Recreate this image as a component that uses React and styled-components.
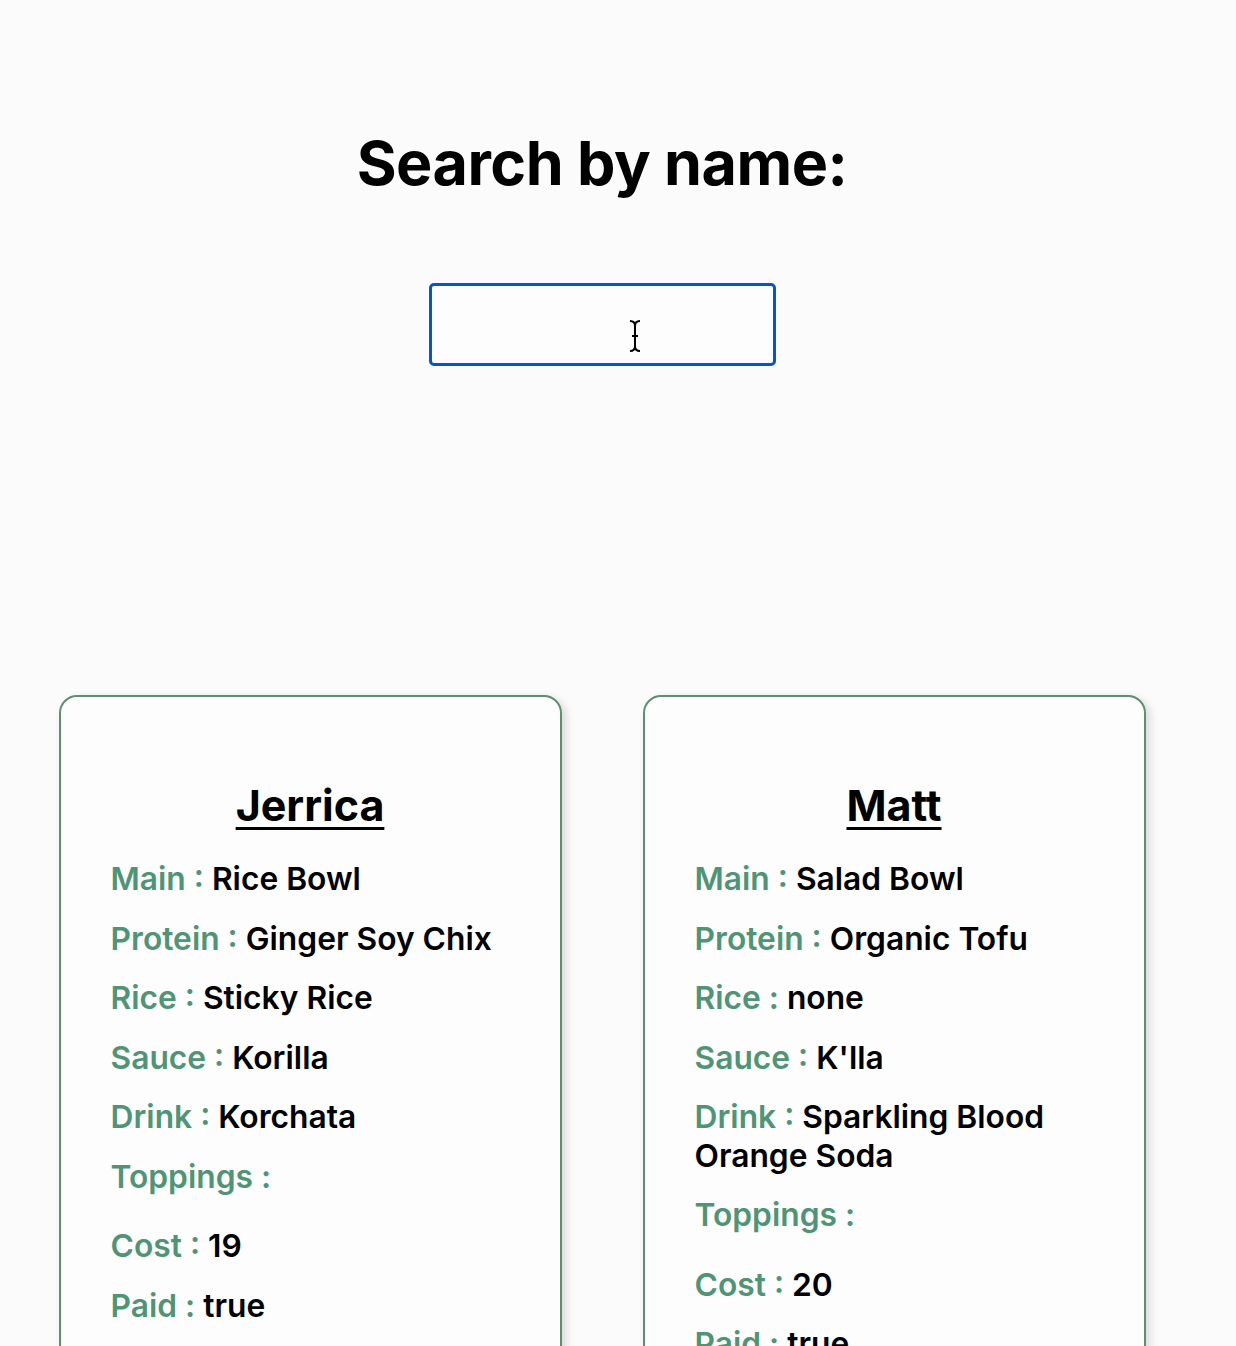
import React from 'react';
import styled, { createGlobalStyle } from 'styled-components';

const GlobalStyle = createGlobalStyle`
  html, body {
    margin: 0;
    background: #fbfbfb;
    font-family: Inter, "Noto Sans", "Liberation Sans", sans-serif;
    color: #000;
  }
`;

const Page = styled.div`
  width: 1204px;
  padding-top: 126px;
  display: flex;
  flex-direction: column;
  align-items: center;
`;

const Heading = styled.h1`
  margin: 0;
  font-size: 61px;
  font-weight: 700;
  letter-spacing: -0.5px;
  line-height: 75px;
`;

const SearchWrap = styled.div`
  position: relative;
  margin-top: 82px;
`;

const SearchInput = styled.input`
  box-sizing: border-box;
  width: 347px;
  height: 83px;
  border: 3px solid #0656c9;
  border-radius: 5px;
  background: #fdfdfd;
  outline: none;
  font-size: 24px;
  font-family: inherit;
`;

const Caret = styled.svg`
  position: absolute;
  left: 199px;
  top: 37px;
  pointer-events: none;
`;

const Cards = styled.div`
  margin-top: 329px;
  display: grid;
  grid-template-columns: 503px 503px;
  gap: 81px;
`;

const Card = styled.div`
  box-sizing: border-box;
  height: 700px;
  border: 2px solid #5d9073;
  border-radius: 18px;
  background: #fdfdfd;
  box-shadow: 4px 3px 8px rgba(0, 0, 0, 0.14);
  padding: 80px 50px 0 50px;
`;

const Name = styled.h2`
  margin: 0 0 27px;
  text-align: center;
  font-size: 43px;
  font-weight: 700;
  text-decoration: underline;
  text-decoration-thickness: 3px;
  text-underline-offset: 6px;
  line-height: 56px;
`;

const Row = styled.p`
  margin: 0 0 21px;
  font-size: 31.75px;
  font-weight: 600;
  line-height: 38.5px;
  ${(p) => p.$extra && 'margin-bottom: 31px;'}
`;

const Label = styled.span`
  color: #4f9575;
`;

const orders = [
  {
    name: 'Jerrica',
    main: 'Rice Bowl',
    protein: 'Ginger Soy Chix',
    rice: 'Sticky Rice',
    sauce: 'Korilla',
    drink: 'Korchata',
    cost: 19,
    paid: 'true',
  },
  {
    name: 'Matt',
    main: 'Salad Bowl',
    protein: 'Organic Tofu',
    rice: 'none',
    sauce: "K'lla",
    drink: 'Sparkling Blood Orange Soda',
    cost: 20,
    paid: 'true',
  },
];

function Order({ order }) {
  return (
    <Card>
      <Name>{order.name}</Name>
      <Row><Label>Main : </Label>{order.main}</Row>
      <Row><Label>Protein : </Label>{order.protein}</Row>
      <Row><Label>Rice : </Label>{order.rice}</Row>
      <Row><Label>Sauce : </Label>{order.sauce}</Row>
      <Row><Label>Drink : </Label>{order.drink}</Row>
      <Row $extra><Label>Toppings : </Label></Row>
      <Row><Label>Cost : </Label>{order.cost}</Row>
      <Row><Label>Paid : </Label>{order.paid}</Row>
    </Card>
  );
}

export default function App() {
  return (
    <>
      <GlobalStyle />
      <Page>
        <Heading>Search by name:</Heading>
        <SearchWrap>
          <SearchInput type="text" />
          <Caret width="14" height="32" viewBox="0 0 14 32">
            <path d="M2 1 Q7 1 7 6 L7 26 Q7 31 2 31 M12 1 Q7 1 7 6 M7 26 Q7 31 12 31 M4 16 L10 16"
              fill="none" stroke="#000" strokeWidth="2" />
          </Caret>
        </SearchWrap>
        <Cards>
          {orders.map((o) => <Order key={o.name} order={o} />)}
        </Cards>
      </Page>
    </>
  );
}
